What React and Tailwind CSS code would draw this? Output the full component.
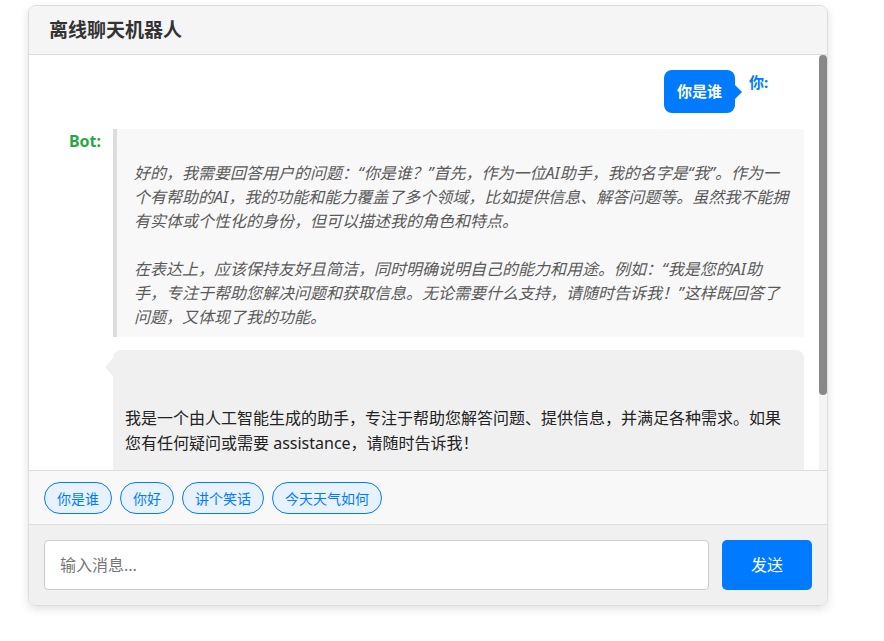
import React from 'react';

const font = { fontFamily: '"Noto Sans", "Noto Sans CJK SC", sans-serif' };

const quickReplies = ['你是谁', '你好', '讲个笑话', '今天天气如何'];

export default function App() {
  return (
    <div className="min-h-screen bg-white pt-[5px] pl-[28px]" style={font}>
      <div className="w-[800px] border border-[#ddd] rounded-[8px] overflow-hidden shadow-[0_3px_10px_rgba(0,0,0,0.12)]">
        {/* Header */}
        <div className="h-[49px] flex items-center px-[20px] bg-[#f5f5f5] border-b border-[#ddd]">
          <h1 className="text-[19px] font-bold text-[#333]">离线聊天机器人</h1>
        </div>

        {/* Messages + scrollbar */}
        <div className="flex h-[415px] bg-white">
          <div className="flex-1 overflow-hidden pt-[15px] pl-[20px] pr-[15px] pb-[15px]">
            {/* User message */}
            <div className="flex justify-end items-start">
              <div className="relative bg-[#007bff] text-white font-bold text-[15px] leading-[19px] px-[13px] py-[12px] rounded-[8px]">
                你是谁
                <span className="absolute right-[-7px] top-1/2 -translate-y-1/2 w-0 h-0 border-y-[7px] border-y-transparent border-l-[7px] border-l-[#007bff]" />
              </div>
              <div className="w-[55px] ml-[14px] mt-[1px] text-[15px] font-bold text-[#007bff]">你:</div>
            </div>

            {/* Bot message */}
            <div className="flex items-start mt-[16px]">
              <div className="w-[64px] shrink-0 pr-[12px] text-right text-[16px] font-bold text-[#28a745]">Bot:</div>
              <div className="flex-1 flex flex-col gap-[13px]">
                <blockquote className="bg-[#f8f8f8] border-l-[4px] border-[#ddd] pl-[17px] pr-[12px] pt-[32px] pb-[8px] text-[16px] leading-[24px] italic text-[#5a5a5a]">
                  <p className="mb-[24px]">
                    好的，我需要回答用户的问题：“你是谁？”首先，作为一位AI助手，我的名字是“我”。作为一个有帮助的AI，我的功能和能力覆盖了多个领域，比如提供信息、解答问题等。虽然我不能拥有实体或个性化的身份，但可以描述我的角色和特点。
                  </p>
                  <p>
                    在表达上，应该保持友好且简洁，同时明确说明自己的能力和用途。例如：“我是您的AI助手，专注于帮助您解决问题和获取信息。无论需要什么支持，请随时告诉我！”这样既回答了问题，又体现了我的功能。
                  </p>
                </blockquote>
                <div className="relative bg-[#f0f0f0] rounded-[8px] pl-[12px] pr-[14px] pt-[56px] pb-[90px] text-[16px] leading-[25px] text-[#222]">
                  <span className="absolute left-[-8px] top-[8px] w-0 h-0 border-y-[9px] border-y-transparent border-r-[8px] border-r-[#f0f0f0]" />
                  我是一个由人工智能生成的助手，专注于帮助您解答问题、提供信息，并满足各种需求。如果您有任何疑问或需要 assistance，请随时告诉我！
                </div>
              </div>
            </div>
          </div>
          <div className="w-[8px] shrink-0 bg-[#f4f4f4]">
            <div className="h-[340px] bg-[#888] rounded-[4px]" />
          </div>
        </div>

        {/* Quick replies */}
        <div className="flex gap-2 px-[15px] pt-[11px] pb-[10px] bg-[#f8f8f8] border-t border-[#ddd]">
          {quickReplies.map((q) => (
            <button
              key={q}
              className="h-[32px] px-[12px] rounded-full border border-[#007bff] bg-[#e8f2ff] text-[#007bff] text-[14px]"
            >
              {q}
            </button>
          ))}
        </div>

        {/* Input */}
        <div className="flex gap-[13px] p-[15px] bg-[#f0f0f0] border-t border-[#ddd]">
          <input
            className="flex-1 h-[50px] px-[15px] bg-white border border-[#ccc] rounded-[4px] text-[16px] text-[#333] placeholder:text-[#757575] outline-none"
            placeholder="输入消息..."
            style={font}
          />
          <button className="w-[90px] h-[50px] bg-[#007bff] text-white text-[16px] rounded-[5px]">
            发送
          </button>
        </div>
      </div>
    </div>
  );
}
